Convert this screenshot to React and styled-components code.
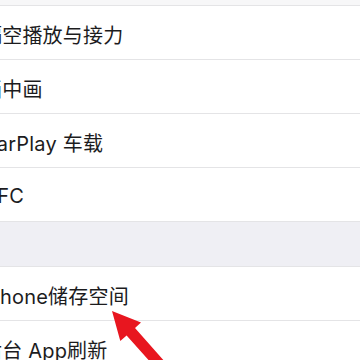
import React from 'react';
import styled, {createGlobalStyle} from "styled-components";

const GlobalStyle = createGlobalStyle`
	html, body {
		margin: 0;
		padding: 0;
		background: #ffffff;
	}
	body {
		font-family: "Inter", "Noto Sans CJK SC", sans-serif;
	}
`

const Screen = styled.div`
	position: relative;
	width: 360px;
	height: 360px;
	overflow: hidden;
	background: #ffffff;
`

const TopEdge = styled.div`
	height: 5px;
	background: #f7f7f8;
`

const Group = styled.div`
	display: flex;
	flex-direction: column;
	background: #ffffff;
`

const Row = styled.div`
	display: flex;
	align-items: center;
	box-sizing: border-box;
	height: 54px;
	padding-top: 3px;
	border-top: 1px solid #e4e4e6;
`

const Label = styled.span`
	margin-left: -18px;
	font-size: 20px;
	color: #1c1c1e;
	white-space: nowrap;
	letter-spacing: 0.2px;
`

const Gap = styled.div`
	box-sizing: border-box;
	height: 45px;
	background: #efeff4;
	border-top: 1px solid #e4e4e6;
`

const ArrowMark = styled.svg`
	position: absolute;
	left: 0;
	top: 0;
	pointer-events: none;
`

const firstGroup = ['隔空播放与接力', '画中画', 'CarPlay 车载', 'NFC']
const secondGroup = ['iPhone储存空间', '后台 App刷新']

const App = () => {
	return (
		<>
			<GlobalStyle/>
			<Screen>
				<TopEdge/>
				<Group>
					{firstGroup.map(item => (
						<Row key={item}><Label>{item}</Label></Row>
					))}
				</Group>
				<Gap/>
				<Group>
					{secondGroup.map(item => (
						<Row key={item}><Label>{item}</Label></Row>
					))}
				</Group>
				<ArrowMark width="360" height="360" viewBox="0 0 360 360">
					<polygon
						points="112,311 141,322.5 135,328 169.5,367 161,374 126.6,335.5 120.3,341"
						fill="#e8161f"
					/>
				</ArrowMark>
			</Screen>
		</>
	);
};

export default App;
